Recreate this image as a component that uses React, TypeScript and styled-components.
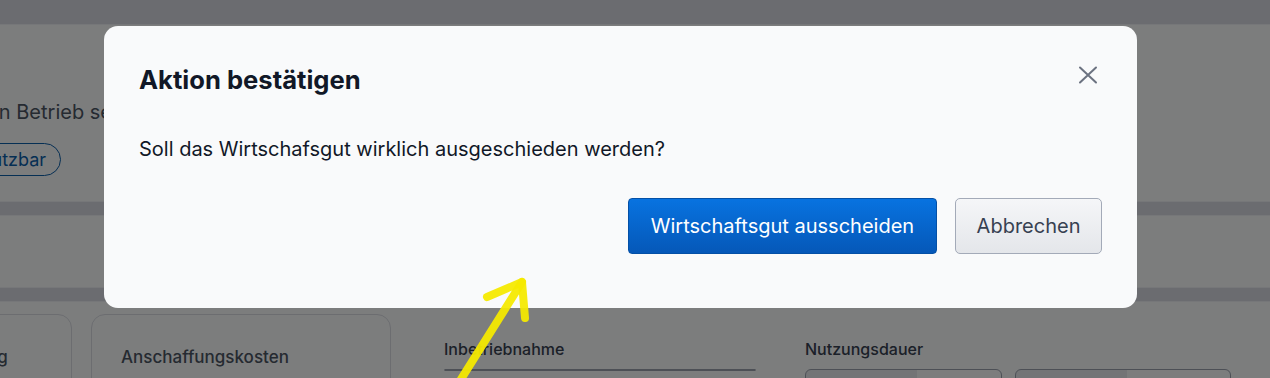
import React from "react";
import styled, { createGlobalStyle } from "styled-components";

const GlobalStyle = createGlobalStyle`
  html, body {
    margin: 0;
    padding: 0;
    width: 1270px;
    height: 378px;
    overflow: hidden;
    font-family: Inter, "Noto Sans", "Liberation Sans", sans-serif;
    background: #d6d8e0;
  }
  * { box-sizing: border-box; }
`;

/* page behind the dialog */

const Page = styled.div`
  width: 1270px;
  height: 378px;
  padding-top: 24px;
  display: flex;
  flex-direction: column;
  gap: 13px;
  overflow: hidden;
`;

const Section = styled.section<{ $height?: number }>`
  background: #f9fafb;
  flex: ${(p) => (p.$height ? `0 0 ${p.$height}px` : "1 1 auto")};
  border-top: 1px solid #eceef2;
  border-bottom: 1px solid #eceef2;
`;

const StatusBlock = styled.div`
  display: flex;
  flex-direction: column;
  align-items: flex-start;
  gap: 17px;
  padding-top: 73px;
  margin-left: -6px;
`;

const StatusText = styled.div`
  font-size: 20px;
  line-height: 28px;
  color: #4b5563;
`;

const Pill = styled.span`
  display: inline-flex;
  align-items: center;
  height: 33px;
  padding: 0 14px;
  margin-left: -31px;
  border: 1.5px solid #0b5ea8;
  border-radius: 999px;
  font-size: 18px;
  color: #0b5ea8;
`;

const CardRow = styled.div`
  display: flex;
  align-items: flex-start;
  padding-top: 12px;
  margin-left: -136px;
`;

const Card = styled.div<{ $width: number; $gapAfter: number }>`
  flex: 0 0 ${(p) => p.$width}px;
  margin-right: ${(p) => p.$gapAfter}px;
  height: 120px;
  padding: 30px 29px;
  border: 1px solid #d8dbe1;
  border-radius: 14px;
  background: #f9fafb;
`;

const CardLabel = styled.div`
  font-size: 17px;
  line-height: 24px;
  font-weight: 500;
  color: #4b5563;
  white-space: nowrap;
`;

const Field = styled.div<{ $width: number; $gapAfter: number }>`
  flex: 0 0 ${(p) => p.$width}px;
  margin-right: ${(p) => p.$gapAfter}px;
  padding-top: 23px;
  display: flex;
  flex-direction: column;
  gap: 8px;
`;

const FieldLabel = styled.label`
  font-size: 16px;
  line-height: 24px;
  font-weight: 500;
  color: #374151;
`;

const InputRow = styled.div`
  display: flex;
  gap: 13px;
`;

const Input = styled.div<{ $width?: number; $split?: number }>`
  flex: ${(p) => (p.$width ? `0 0 ${p.$width}px` : "1 1 0")};
  height: 40px;
  border: 1.5px solid #9aa1ad;
  border-radius: 6px;
  background: ${(p) =>
    p.$split
      ? `linear-gradient(to right, #e6e8ec ${p.$split}%, #f9fafb ${p.$split}%)`
      : "#f9fafb"};
`;

/* modal */

const Overlay = styled.div`
  position: fixed;
  inset: 0;
  background: rgba(0, 0, 0, 0.5);
  padding: 26px 0 0 104px;
`;

const Dialog = styled.div`
  width: 1033px;
  height: 282px;
  background: #f9fafb;
  border-radius: 14px;
  padding: 35px;
  display: flex;
  flex-direction: column;
`;

const Header = styled.div`
  display: flex;
  justify-content: space-between;
  align-items: flex-start;
`;

const Title = styled.h2`
  margin: 3px 0 0;
  font-size: 25.6px;
  line-height: 32px;
  font-weight: 700;
  color: #111827;
`;

const CloseButton = styled.button`
  width: 28px;
  height: 28px;
  padding: 0;
  border: 0;
  background: transparent;
  color: #6b7280;
  display: flex;
  align-items: center;
  justify-content: center;
  cursor: pointer;
`;

const Message = styled.p`
  margin: 39px 0 0;
  font-size: 20px;
  line-height: 28px;
  color: #111827;
`;

const Footer = styled.div`
  margin-top: 35px;
  display: flex;
  justify-content: flex-end;
  gap: 18px;
`;

const Button = styled.button<{ $primary?: boolean }>`
  height: 56px;
  padding: 0 ${(p) => (p.$primary ? "22px" : "20.5px")};
  font-family: inherit;
  font-size: 20px;
  border-radius: ${(p) => (p.$primary ? "4px" : "5px")};
  border: 1px solid ${(p) => (p.$primary ? "#0450a6" : "#a3aab8")};
  color: ${(p) => (p.$primary ? "#ffffff" : "#374151")};
  background: ${(p) =>
    p.$primary
      ? "linear-gradient(to bottom, #0873e0, #0558b8)"
      : "linear-gradient(to bottom, #f5f6f8, #e4e6ea)"};
  cursor: pointer;
`;

const Annotation = styled.svg`
  position: fixed;
  left: 0;
  top: 0;
  pointer-events: none;
`;

export default function App() {
  return (
    <>
      <GlobalStyle />
      <Page>
        <Section $height={178}>
          <StatusBlock>
            <StatusText>in Betrieb setzen</StatusText>
            <Pill>Nutzbar</Pill>
          </StatusBlock>
        </Section>
        <Section $height={73} />
        <Section>
          <CardRow>
            <Card $width={208} $gapAfter={19}>
              <CardLabel>Abschreibung</CardLabel>
            </Card>
            <Card $width={300} $gapAfter={53}>
              <CardLabel>Anschaffungskosten</CardLabel>
            </Card>
            <Field $width={312} $gapAfter={49}>
              <FieldLabel>Inbetriebnahme</FieldLabel>
              <Input />
            </Field>
            <Field $width={426} $gapAfter={0}>
              <FieldLabel>Nutzungsdauer</FieldLabel>
              <InputRow>
                <Input $width={197} $split={57} />
                <Input $width={216} $split={52} />
              </InputRow>
            </Field>
          </CardRow>
        </Section>
      </Page>

      <Overlay>
        <Dialog role="dialog" aria-modal="true">
          <Header>
            <Title>Aktion bestätigen</Title>
            <CloseButton aria-label="Schließen">
              <svg width="20" height="20" viewBox="0 0 20 20" fill="none">
                <path
                  d="M2 2.5 L18 17.5 M18 2.5 L2 17.5"
                  stroke="currentColor"
                  strokeWidth="2"
                  strokeLinecap="round"
                />
              </svg>
            </CloseButton>
          </Header>
          <Message>Soll das Wirtschafsgut wirklich ausgeschieden werden?</Message>
          <Footer>
            <Button $primary>Wirtschaftsgut ausscheiden</Button>
            <Button>Abbrechen</Button>
          </Footer>
        </Dialog>
      </Overlay>

      <Annotation width="1270" height="378" viewBox="0 0 1270 378">
        <g
          stroke="#f5ea00"
          strokeOpacity="0.94"
          strokeWidth="8"
          strokeLinecap="round"
          strokeLinejoin="round"
          fill="none"
        >
          <path d="M458 384 L522 282" />
          <path d="M487 297 L522 282 L525 318" />
        </g>
      </Annotation>
    </>
  );
}
